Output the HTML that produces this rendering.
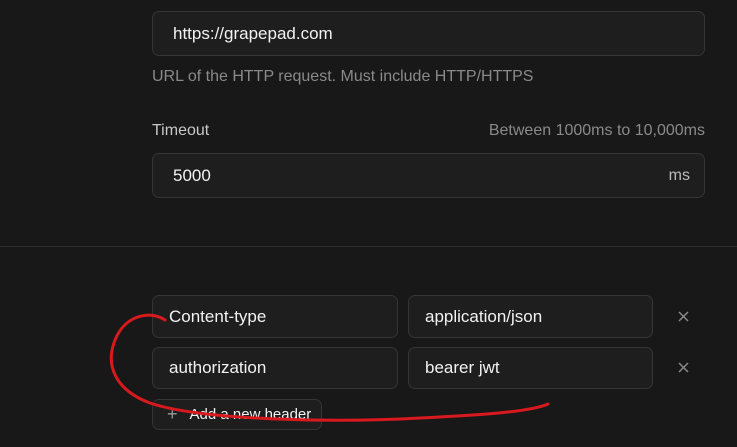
<!DOCTYPE html>
<html><head><style>
*{box-sizing:border-box;margin:0;padding:0}
body{width:737px;height:447px;background:#181818;font-family:"Liberation Sans",sans-serif;position:relative;overflow:hidden;color:#f2f2f2}
.in{position:absolute;background:#1e1e1e;border:1px solid #353535;border-radius:7px;font-size:17px;padding-left:16px;display:flex;align-items:center}
.t{position:absolute;font-size:16px;color:#8a8a8a}
.x{position:absolute;color:#8a8a8a;font-size:16px}
</style></head><body>
<div class="in" style="left:152px;top:11px;width:553px;height:45px;padding-left:20px">https://grapepad.com</div>
<div class="t" style="left:152px;top:68px">URL of the HTTP request. Must include HTTP/HTTPS</div>
<div class="t" style="left:152px;top:122px;color:#c8c8c8">Timeout</div>
<div class="t" style="right:32px;top:122px">Between 1000ms to 10,000ms</div>
<div class="in" style="left:152px;top:153px;width:553px;height:45px;padding-left:20px">5000<span style="position:absolute;right:14px;color:#bbb;font-size:16px">ms</span></div>
<div style="position:absolute;left:0;top:246px;width:737px;height:1px;background:#2e2e2e"></div>
<div class="in" style="left:152px;top:295px;width:246px;height:43px">Content-type</div>
<div class="in" style="left:408px;top:295px;width:245px;height:43px">application/json</div>
<svg class="x" style="left:678px;top:311px" width="11" height="11"><path d="M1,1L10,10M10,1L1,10" stroke="#8a8a8a" stroke-width="1.5"/></svg>
<div class="in" style="left:152px;top:347px;width:246px;height:42px">authorization</div>
<div class="in" style="left:408px;top:347px;width:245px;height:42px">bearer jwt</div>
<svg class="x" style="left:678px;top:362px" width="11" height="11"><path d="M1,1L10,10M10,1L1,10" stroke="#8a8a8a" stroke-width="1.5"/></svg>
<div class="in" style="left:152px;top:399px;width:170px;height:31px;font-size:15px;padding-left:14px"><span style="color:#999;font-size:18px;margin-right:12px">+</span>Add a new header</div>
<svg style="position:absolute;left:0;top:0" width="737" height="447"><path d="M165,320 C150,310 125,315 115,340 C105,365 115,390 150,403 C200,420 330,423 420,418 C480,415 530,412 548,404" fill="none" stroke="#d8191d" stroke-width="3" stroke-linecap="round"/></svg>
</body></html>
